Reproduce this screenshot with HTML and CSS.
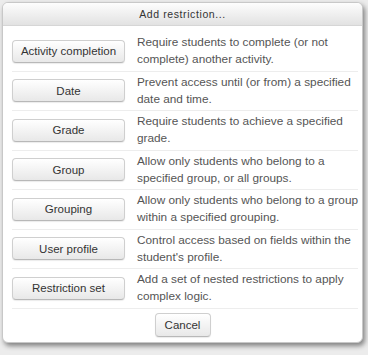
FILE: index.html
```html
<!DOCTYPE html>
<html lang="en">
<head>
  <meta charset="UTF-8" />
  <title>Add restriction</title>
  <link rel="stylesheet" href="styles.css">
</head>
<body>

<div class="dialog">
  <div class="dialog-header">Add restriction...</div>

  <div class="dialog-body">
    <div class="row">
      <button class="btn">Activity completion</button>
      <div class="desc">Require students to complete (or not<br>complete) another activity.</div>
    </div>
    <div class="row">
      <button class="btn">Date</button>
      <div class="desc">Prevent access until (or from) a specified<br>date and time.</div>
    </div>
    <div class="row">
      <button class="btn">Grade</button>
      <div class="desc">Require students to achieve a specified<br>grade.</div>
    </div>
    <div class="row">
      <button class="btn">Group</button>
      <div class="desc">Allow only students who belong to a<br>specified group, or all groups.</div>
    </div>
    <div class="row">
      <button class="btn">Grouping</button>
      <div class="desc">Allow only students who belong to a group<br>within a specified grouping.</div>
    </div>
    <div class="row">
      <button class="btn">User profile</button>
      <div class="desc">Control access based on fields within the<br>student's profile.</div>
    </div>
    <div class="row">
      <button class="btn">Restriction set</button>
      <div class="desc">Add a set of nested restrictions to apply<br>complex logic.</div>
    </div>
  </div>

  <div class="dialog-footer">
    <button class="btn btn-cancel">Cancel</button>
  </div>
</div>

</body>
</html>
```

FILE: styles.css
```css
* { box-sizing: border-box; margin: 0; padding: 0; }

body {
  font-family: 'Liberation Sans', Arial, sans-serif;
  background: #ececec;
  width: 368px;
  height: 355px;
  overflow: hidden;
  padding: 2px 0 0 2px;
}

.dialog {
  width: 361px;
  height: 341px;
  background: #fff;
  border: 1px solid #c8c8c8;
  border-radius: 6px;
  box-shadow: 2px 3px 5px rgba(0,0,0,0.45);
  overflow: hidden;
  display: flex;
  flex-direction: column;
}

.dialog-header {
  height: 23px;
  flex: none;
  display: flex;
  align-items: center;
  justify-content: center;
  font-size: 10.5px;
  letter-spacing: 0.6px;
  color: #333;
  background: linear-gradient(#fdfdfd, #e2e2e2);
  border-bottom: 1px solid #d6d6d6;
}

.dialog-body { padding: 6px 4px 0 9px; }

.row {
  height: 39.5px;
  display: flex;
  align-items: center;
  border-bottom: 1px solid #ededed;
}

.btn {
  flex: none;
  width: 113px;
  height: 23px;
  font-family: 'Liberation Sans', Arial, sans-serif;
  font-size: 11.5px;
  color: #333;
  background: linear-gradient(#ffffff, #e8e8e8);
  border: 1px solid #cfcfcf;
  border-bottom-color: #b8b8b8;
  border-radius: 4px;
  box-shadow: 0 1px 1px rgba(0,0,0,0.08);
}

.desc {
  margin-left: 12px;
  font-size: 11.8px;
  line-height: 17px;
  color: #555;
  white-space: nowrap;
}

.dialog-footer {
  flex: 1;
  display: flex;
  align-items: center;
  justify-content: center;
  padding-bottom: 1px;
}

.btn-cancel { width: 56px; height: 24px; }
```
